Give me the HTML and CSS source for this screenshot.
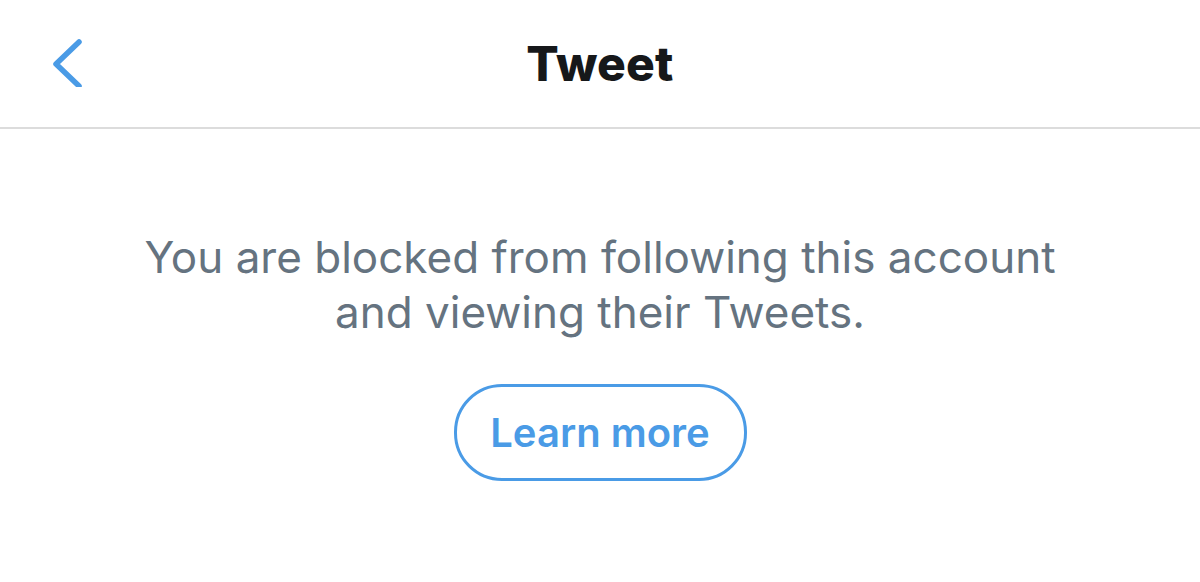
FILE: index.html
```html
<!DOCTYPE html>
<html lang="en">
<head>
  <meta charset="UTF-8">
  <meta name="viewport" content="width=device-width, initial-scale=1.0">
  <title>Tweet</title>
  <link rel="stylesheet" href="styles.css">
</head>
<body>
  <div class="page">

    <div class="topbar">
      <a class="back" href="#">
        <svg width="40" height="60" viewBox="0 0 40 60">
          <path d="M28 15 L5 37 L28 59" fill="none" stroke="#4a9be6" stroke-width="5.5" stroke-linecap="round" stroke-linejoin="round"/>
        </svg>
      </a>
      <h1 class="title">Tweet</h1>
    </div>

    <div class="blocked">
      <p class="message">You are blocked from following this account<br>and viewing their Tweets.</p>
      <button class="learn">Learn more</button>
    </div>

  </div>
</body>
</html>
```

FILE: styles.css
```css
body{
  margin: 0;
  background-color: white;
  font-family: "Inter", "Roboto", sans-serif;
}

.page{
  width: 100%;
  height: 100vh;
}

.topbar{
  display: flex;
  align-items: center;
  justify-content: center;
  position: relative;
  height: 127px;
  border-bottom: 2px solid #dcdcdc;
}

.back{
  position: absolute;
  left: 51px;
  top: 27px;
  display: block;
}

.title{
  margin: 0;
  font-size: 48px;
  font-weight: 800;
  color: #16181a;
  letter-spacing: 0.2px;
}

.blocked{
  display: flex;
  flex-direction: column;
  align-items: center;
  padding-top: 101px;
}

.message{
  margin: 0;
  font-size: 44px;
  line-height: 55px;
  color: #657380;
  text-align: center;
}

.learn{
  margin-top: 44px;
  width: 293px;
  height: 97px;
  border: 3px solid #4a9be6;
  border-radius: 48px;
  background-color: white;
  color: #4a9be6;
  font-family: "Inter", "Roboto", sans-serif;
  font-size: 40px;
  font-weight: 600;
}
```
